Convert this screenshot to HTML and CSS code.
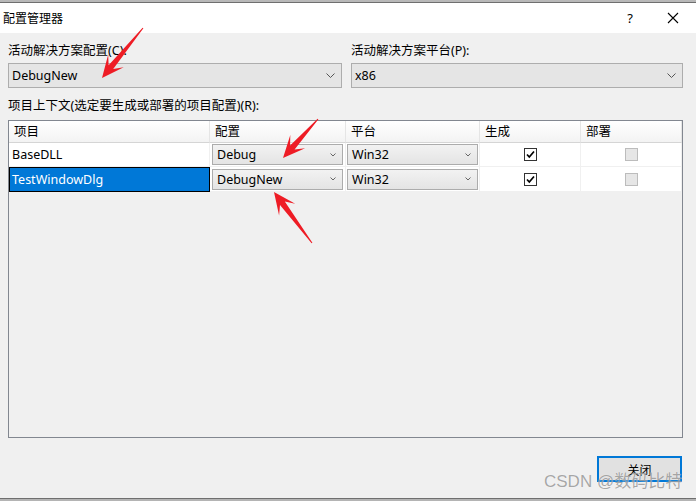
FILE: index.html
```html
<!DOCTYPE html>
<html lang="zh-CN">
<head>
    <meta charset="UTF-8">
    <meta name="viewport" content="width=device-width, initial-scale=1.0">
    <title>配置管理器</title>
    <link rel="stylesheet" href="styles.css">
</head>
<body>
    <div class="window">
        <div class="frame-top"></div>

        <!-- Title bar -->
        <div class="titlebar">
            <span class="title">配置管理器</span>
            <div class="title-buttons">
                <span class="help">?</span>
                <svg class="close-x" width="12" height="12" viewBox="0 0 12 12">
                    <path d="M1 1 L11 11 M11 1 L1 11" stroke="#000" stroke-width="1.1" fill="none"/>
                </svg>
            </div>
        </div>

        <div class="content">
            <!-- Solution configuration / platform -->
            <div class="top-row">
                <div class="field">
                    <label>活动解决方案配置(C):</label>
                    <div class="combo combo-large">
                        <span>DebugNew</span>
                        <svg width="9" height="5" viewBox="0 0 9 5"><polyline points="0.5,0.5 4.5,4.5 8.5,0.5" fill="none" stroke="#555" stroke-width="1"/></svg>
                    </div>
                </div>
                <div class="field">
                    <label>活动解决方案平台(P):</label>
                    <div class="combo combo-large">
                        <span>x86</span>
                        <svg width="9" height="5" viewBox="0 0 9 5"><polyline points="0.5,0.5 4.5,4.5 8.5,0.5" fill="none" stroke="#555" stroke-width="1"/></svg>
                    </div>
                </div>
            </div>

            <div class="context-label">项目上下文(选定要生成或部署的项目配置)(R):</div>

            <!-- Project grid -->
            <div class="grid-box">
                <div class="grid">
                    <div class="head">项目</div>
                    <div class="head">配置</div>
                    <div class="head">平台</div>
                    <div class="head">生成</div>
                    <div class="head">部署</div>

                    <div class="cell name">BaseDLL</div>
                    <div class="cell combo-cell cfg">
                        <div class="combo combo-small"><span>Debug</span><svg width="6" height="4" viewBox="0 0 6 4"><polyline points="0.5,0.5 3,3 5.5,0.5" fill="none" stroke="#666" stroke-width="1"/></svg></div>
                    </div>
                    <div class="cell combo-cell plat">
                        <div class="combo combo-small"><span>Win32</span><svg width="6" height="4" viewBox="0 0 6 4"><polyline points="0.5,0.5 3,3 5.5,0.5" fill="none" stroke="#666" stroke-width="1"/></svg></div>
                    </div>
                    <div class="cell check-cell">
                        <span class="checkbox"><svg width="11" height="11" viewBox="0 0 11 11"><path d="M2 5.5 L4.3 8 L9 2.5" fill="none" stroke="#000" stroke-width="1.7"/></svg></span>
                    </div>
                    <div class="cell check-cell"><span class="checkbox disabled"></span></div>

                    <div class="cell name selected">TestWindowDlg</div>
                    <div class="cell combo-cell cfg">
                        <div class="combo combo-small"><span>DebugNew</span><svg width="6" height="4" viewBox="0 0 6 4"><polyline points="0.5,0.5 3,3 5.5,0.5" fill="none" stroke="#666" stroke-width="1"/></svg></div>
                    </div>
                    <div class="cell combo-cell plat">
                        <div class="combo combo-small"><span>Win32</span><svg width="6" height="4" viewBox="0 0 6 4"><polyline points="0.5,0.5 3,3 5.5,0.5" fill="none" stroke="#666" stroke-width="1"/></svg></div>
                    </div>
                    <div class="cell check-cell">
                        <span class="checkbox"><svg width="11" height="11" viewBox="0 0 11 11"><path d="M2 5.5 L4.3 8 L9 2.5" fill="none" stroke="#000" stroke-width="1.7"/></svg></span>
                    </div>
                    <div class="cell check-cell"><span class="checkbox disabled"></span></div>
                </div>
            </div>

            <div class="actions">
                <button class="close-btn">关闭</button>
            </div>
        </div>

        <div class="frame-bottom"></div>

        <!-- Annotation arrows -->
        <svg class="arrows" width="696" height="501" viewBox="0 0 696 501">
            <polygon fill="#ee1c25" points="143.4,28.3 113.2,69.1 123.7,67.3 102,78 108.2,54.6 108.6,65.3 142.6,27.7"/>
            <polygon fill="#ee1c25" points="318.4,119.3 294.6,149.6 305.1,148.3 283,158 290.3,134.9 290.1,145.6 317.6,118.7"/>
            <polygon fill="#ee1c25" points="312.4,242.7 284.8,201.4 295.2,203.7 274,192 279.1,215.6 280,205 311.6,243.3"/>
        </svg>

        <div class="watermark">CSDN @数码比特</div>
    </div>
</body>
</html>
```

FILE: styles.css
```css
* {
    box-sizing: border-box;
}
body {
    margin: 0;
    padding: 0;
    font-family: "Noto Sans", "Noto Sans CJK SC", sans-serif;
    font-size: 12.5px;
    color: #000;
    overflow: hidden;
}
.window {
    position: relative;
    width: 696px;
    height: 501px;
    display: flex;
    flex-direction: column;
    background: #f0f0f0;
}
.frame-top {
    height: 3px;
    background: #b8b8b8;
    border-bottom: 1px solid #6f6f6f;
}
.frame-bottom {
    height: 3px;
    background: #b4b4b4;
    border-top: 1px solid #6f6f6f;
}
.titlebar {
    height: 30px;
    background: #ffffff;
    display: flex;
    align-items: center;
    justify-content: space-between;
    padding-left: 3px;
}
.title {
    line-height: 16px;
    font-size: 12px;
    font-family: "Noto Sans CJK SC", sans-serif;
}
.title-buttons {
    display: flex;
    align-items: center;
    padding-right: 17px;
}
.help {
    font-size: 13px;
    margin-right: 34px;
}
.content {
    flex: 1;
    padding: 10px 13px 0 8px;
}
.top-row {
    display: grid;
    grid-template-columns: 334px 332px;
    column-gap: 9px;
}
.field label {
    display: block;
    line-height: 16px;
    margin-bottom: 4px;
}
.combo {
    display: flex;
    align-items: center;
    justify-content: space-between;
}
.combo-large {
    height: 25px;
    background: #e5e5e5;
    border: 1px solid #adadad;
    padding: 0 6px 0 3px;
}
.context-label {
    line-height: 16px;
    margin-top: 10px;
    margin-bottom: 6px;
}
.grid-box {
    height: 318px;
    border: 1px solid #828790;
    background: #f0f0f0;
}
.grid {
    display: grid;
    grid-template-columns: 201px 136px 134px 101px 101px;
    grid-template-rows: 22px 24px 25px;
}
.head {
    background: linear-gradient(#ffffff, #f3f3f3);
    border-right: 1px solid #e5e5e5;
    border-bottom: 1px solid #d5d5d5;
    padding-left: 5px;
    line-height: 21px;
}
.cell {
    background: #ffffff;
    border-right: 1px solid #f0f0f0;
    border-bottom: 1px solid #f0f0f0;
    display: flex;
    align-items: center;
}
.name {
    padding-left: 3px;
}
.selected {
    background: #0078d7;
    color: #ffffff;
    border: 1px solid #000;
    padding-left: 2px;
}
.combo-cell.cfg {
    padding: 0 2px 0 2px;
}
.combo-cell.plat {
    padding: 0 1px 0 1px;
}
.combo-small {
    width: 100%;
    height: 21px;
    background: linear-gradient(#f2f2f2, #e4e4e4);
    border: 1px solid #acacac;
    padding: 0 6px 0 4px;
}
.check-cell {
    justify-content: center;
}
.checkbox {
    width: 13px;
    height: 13px;
    border: 1px solid #333;
    background: #fff;
    display: flex;
    align-items: center;
    justify-content: center;
}
.checkbox.disabled {
    border-color: #bcbcbc;
    background: #e6e6e6;
}
.actions {
    display: flex;
    justify-content: flex-end;
    margin-top: 18px;
    padding-right: 1px;
}
.close-btn {
    width: 85px;
    height: 26px;
    border: 2px solid #0078d7;
    background: #e1e1e1;
    font-family: "Noto Sans CJK SC", sans-serif;
    font-size: 12px;
    color: #000;
    padding: 0;
}
.arrows {
    position: absolute;
    left: 0;
    top: 0;
    pointer-events: none;
}
.watermark {
    position: absolute;
    left: 544px;
    top: 471px;
    font-family: "Liberation Sans", "Noto Sans CJK SC", sans-serif;
    font-size: 17px;
    line-height: 22px;
    color: rgba(110, 110, 110, 0.6);
    text-shadow: 0 0 1px rgba(255, 255, 255, 0.8);
    pointer-events: none;
}
```
